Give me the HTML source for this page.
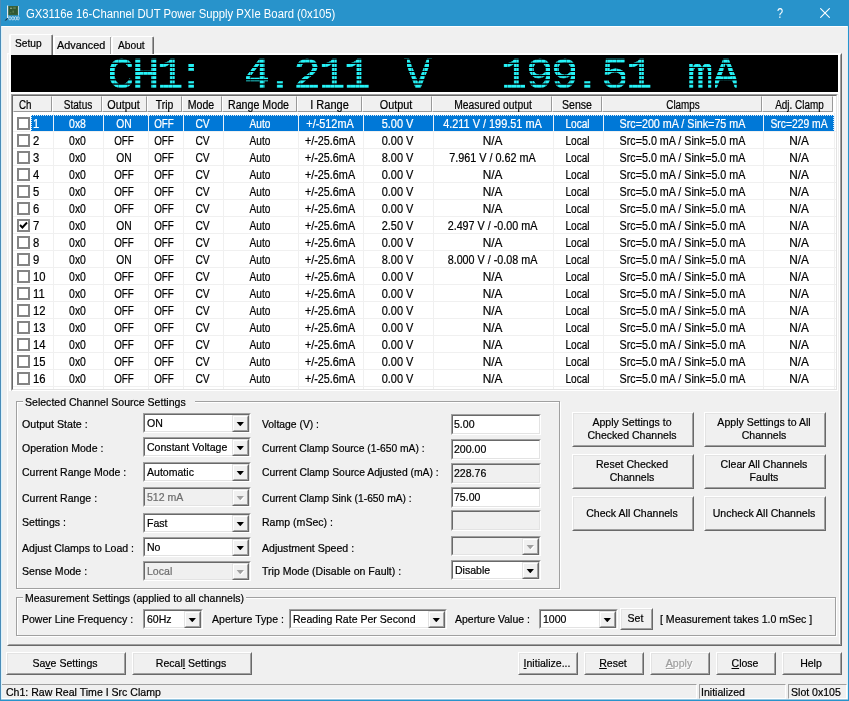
<!DOCTYPE html><html><head><meta charset="utf-8"><title>GX3116e</title><style>
*{box-sizing:border-box;margin:0;padding:0}
html,body{width:849px;height:701px;overflow:hidden}
body{position:relative;background:#f0f0f0;font-family:"Liberation Sans",sans-serif;font-size:11.6px;color:#000;line-height:13px;-webkit-text-stroke:0.22px}
.a{position:absolute;white-space:nowrap}
.t{transform:scaleX(0.91);transform-origin:0 50%}
.tc{transform:scaleX(0.91);transform-origin:50% 50%;text-align:center}
#title{left:0;top:0;width:849px;height:26px;background:#2893cb}
#frame{left:0;top:0;width:849px;height:701px;border:1px solid #2893cb;border-top:0;border-left-color:#4a8cb8}
#frame2{left:1px;top:26px;width:847px;height:673px;border:1px solid #dcf2fb;border-top:0;border-bottom:0}
#ttext{left:26px;top:6.5px;font-size:12px;color:#fff;line-height:15px;-webkit-text-stroke:0;transform:scaleX(.94);transform-origin:0 50%}
.sunk{border:1px solid;border-color:#a0a0a0 #fff #fff #a0a0a0}
.sunk>i{position:absolute;left:0;top:0;right:0;bottom:0;border:1px solid;border-color:#696969 #e3e3e3 #e3e3e3 #696969;display:block}
.btn{border:1px solid;border-color:#fff #696969 #696969 #fff;background:#f0f0f0;text-align:center}
.btn>i{position:absolute;left:0;top:0;right:0;bottom:0;border:1px solid;border-color:#e3e3e3 #a0a0a0 #a0a0a0 #e3e3e3;display:block}
.btn>span{position:relative;display:block;left:-0.7px}
.combo{background:#fff}
.combo.dis{background:#f0f0f0;color:#6d6d6d}
.combo>span{position:absolute;left:2.5px;top:1.5px}
.dd{position:absolute;right:1px;top:1px;bottom:0;width:17px;background:#f0f0f0;border:1px solid;border-color:#e3e3e3 #696969 #696969 #e3e3e3}
.dd>b{position:absolute;left:0;top:0;right:0;bottom:0;border:1px solid;border-color:#fff #a0a0a0 #a0a0a0 #fff}
.dd>s{position:absolute;left:3.2px;top:5.6px;width:8.2px;height:4.6px;background:#000;clip-path:polygon(0 0,100% 0,50% 100%)}
.dis .dd>s{background:#a0a0a0}
.dis .dd>u{position:absolute;left:4.2px;top:6.6px;width:8.2px;height:4.6px;background:#fff;clip-path:polygon(0 0,100% 0,50% 100%)}
.edit{background:#fff}
.edit.ro{background:#f0f0f0}
.edit>span{position:absolute;left:2px;top:1.5px}
.grp{border:1px solid #a0a0a0;box-shadow:1px 1px 0 #fff,inset 1px 1px 0 #fff}
.glab{background:#f0f0f0}
.hd{top:0;height:16px;background:#f0f0f0;border:1px solid;border-color:#f6f6f6 #999 #999 #fff}
.hd>span{position:absolute;left:0;right:0;top:2px}
.row{left:0;width:822px;height:16px}
.cell{top:0;height:16px;line-height:13px;padding-top:3px;font-size:12.5px}
.cb{left:4px;top:2px;width:13px;height:13px;background:#fff;border:2px solid #848484}
.u{text-decoration:underline}
</style></head><body>
<div class="a" id="title"></div>
<svg class="a" style="left:0;top:0" width="24" height="24" viewBox="0 0 24 24"><rect x="7" y="5.5" width="1.3" height="12.5" fill="#e4eaee"/><rect x="8.3" y="6" width="9.7" height="9.2" fill="#3a6238"/><rect x="9.3" y="7" width="7.7" height="7.2" fill="#2f5631"/><rect x="10" y="7.6" width="2.2" height="1.4" fill="#7f9c78"/><rect x="13.2" y="7.4" width="2.6" height="1.2" fill="#6e8f6a"/><rect x="12.4" y="10.6" width="1.6" height="2.2" fill="#54784f"/><rect x="10" y="12" width="1.4" height="1.4" fill="#486e45"/><rect x="18" y="6" width="0.8" height="9.5" fill="#cfe0ea"/><g fill="none" stroke="#e8f2f8" stroke-width="0.8" opacity=".85"><ellipse cx="10" cy="18.3" rx="1.2" ry="1.7"/><ellipse cx="12.9" cy="18.3" rx="1.2" ry="1.7"/><ellipse cx="15.6" cy="18.3" rx="1.2" ry="1.7"/><ellipse cx="18.1" cy="18.3" rx="1.1" ry="1.7"/></g><path d="M4.6 20.6L7.2 17.9L8 18.6L6.2 20.6Z" fill="#1d3342"/></svg>
<div class="a" id="ttext">GX3116e 16-Channel DUT Power Supply PXIe Board (0x105)</div>
<div class="a" style="left:777px;top:5.5px;color:#fff;font-size:14px;line-height:15px;-webkit-text-stroke:0;transform:scaleX(.78);transform-origin:0 50%">?</div>
<svg class="a" style="left:820px;top:8px" width="10" height="10" viewBox="0 0 10 10"><path d="M0.3 0.3L9.7 9.7M9.7 0.3L0.3 9.7" stroke="#fff" stroke-width="1.1" fill="none"/></svg>
<div class="a" style="left:1px;top:26px;width:847px;height:1px;background:#fff"></div>
<div class="a" style="left:7px;top:53px;width:835px;height:593px;border:1px solid;border-color:#fff #696969 #696969 #fff"><i style="position:absolute;left:0;top:0;right:0;bottom:0;border:1px solid;border-color:#fff #a0a0a0 #a0a0a0 #f0f0f0"></i></div>
<div class="a" style="left:839px;top:55px;width:1px;height:589px;background:#fff"></div>
<div class="a" style="left:9px;top:55px;width:2px;height:336px;background:#fff"></div>
<div class="a" style="left:53px;top:36px;width:59px;height:18px;background:#f0f0f0;border:1px solid;border-color:#fff #696969 #f0f0f0 #fff;border-bottom:0;border-radius:2px 2px 0 0"><i style="position:absolute;left:0;top:0;right:0;bottom:0;border-right:1px solid #a0a0a0;border-left:1px solid #fff"></i><span class="a" style="left:3.1000000000000014px;top:1px;transform:scaleX(0.9345);transform-origin:0 50%">Advanced</span></div>
<div class="a" style="left:111px;top:36px;width:43px;height:18px;background:#f0f0f0;border:1px solid;border-color:#fff #696969 #f0f0f0 #fff;border-bottom:0;border-radius:2px 2px 0 0"><i style="position:absolute;left:0;top:0;right:0;bottom:0;border-right:1px solid #a0a0a0;border-left:1px solid #fff"></i><span class="a" style="left:6.200000000000003px;top:1px;transform:scaleX(0.8808);transform-origin:0 50%">About</span></div>
<div class="a" style="left:9px;top:34px;width:44px;height:21px;background:#f0f0f0;border:1px solid;border-color:#fff #696969 #f0f0f0 #fff;border-bottom:0;border-radius:2px 2px 0 0"><i style="position:absolute;left:0;top:0;right:0;bottom:0;border-right:1px solid #a0a0a0;border-left:1px solid #fff"></i><span class="a" style="left:5.4px;top:1px;transform:scaleX(0.8808);transform-origin:0 50%">Setup</span></div>
<div class="a" style="left:11px;top:55px;width:829px;height:39px;background:#fff"></div>
<div class="a" id="lcd" style="left:11px;top:55px;width:827px;height:37px;background:#000;overflow:hidden">
<svg class="a" style="left:0;top:0" width="827" height="37" viewBox="11 55 827 37"><g font-family="Liberation Mono, DejaVu Sans Mono, monospace" font-size="43.6" fill="#26f4f8" stroke="#26f4f8" stroke-width="0.5" transform="scale(1.06,1)">
<text x="101.07 124.47 147.86 167.11" y="88">CH1:</text>
<text x="229.37 250.88 276.54 300.69 324.09" y="88">4.211</text>
<text x="381.26" y="88">V</text>
<text x="472.3 496.26 519.84 540.98 567.2 590.5" y="88">199.51</text>
<text x="647.77 671.64" y="88">mA</text>
</g></svg>
<div class="a" style="left:74.20px;top:3.8px;width:148.80px;height:33.2px;background:repeating-linear-gradient(180deg,#000 0,#000 0.35px,transparent 0.9px,transparent 3.3px,#000 3.85px,#000 4.17px),repeating-linear-gradient(90deg,rgba(0,0,0,.35) 0.00px,transparent 0.50px 3.90px,rgba(0,0,0,.35) 4.40px,rgba(0,0,0,.35) 4.40px,transparent 4.90px 8.30px,rgba(0,0,0,.35) 8.80px,rgba(0,0,0,.35) 8.80px,transparent 9.30px 12.70px,rgba(0,0,0,.35) 13.20px,rgba(0,0,0,.35) 13.20px,transparent 13.70px 17.10px,rgba(0,0,0,.35) 17.60px,rgba(0,0,0,.35) 17.60px,transparent 18.10px 21.50px,rgba(0,0,0,.35) 22.00px,#000 22.30px 24.80px)"></div>
<div class="a" style="left:209.90px;top:3.8px;width:175.70px;height:33.2px;background:repeating-linear-gradient(180deg,#000 0,#000 0.35px,transparent 0.9px,transparent 3.3px,#000 3.85px,#000 4.17px),repeating-linear-gradient(90deg,rgba(0,0,0,.35) 0.00px,transparent 0.50px 3.90px,rgba(0,0,0,.35) 4.40px,rgba(0,0,0,.35) 4.40px,transparent 4.90px 8.30px,rgba(0,0,0,.35) 8.80px,rgba(0,0,0,.35) 8.80px,transparent 9.30px 12.70px,rgba(0,0,0,.35) 13.20px,rgba(0,0,0,.35) 13.20px,transparent 13.70px 17.10px,rgba(0,0,0,.35) 17.60px,rgba(0,0,0,.35) 17.60px,transparent 18.10px 21.50px,rgba(0,0,0,.35) 22.00px,#000 22.30px 25.10px)"></div>
<div class="a" style="left:371.00px;top:3.8px;width:75.00px;height:33.2px;background:repeating-linear-gradient(180deg,#000 0,#000 0.35px,transparent 0.9px,transparent 3.3px,#000 3.85px,#000 4.17px),repeating-linear-gradient(90deg,rgba(0,0,0,.35) 0.00px,transparent 0.50px 3.90px,rgba(0,0,0,.35) 4.40px,rgba(0,0,0,.35) 4.40px,transparent 4.90px 8.30px,rgba(0,0,0,.35) 8.80px,rgba(0,0,0,.35) 8.80px,transparent 9.30px 12.70px,rgba(0,0,0,.35) 13.20px,rgba(0,0,0,.35) 13.20px,transparent 13.70px 17.10px,rgba(0,0,0,.35) 17.60px,rgba(0,0,0,.35) 17.60px,transparent 18.10px 21.50px,rgba(0,0,0,.35) 22.00px,#000 22.30px 25.00px)"></div>
<div class="a" style="left:467.44px;top:3.8px;width:200.48px;height:33.2px;background:repeating-linear-gradient(180deg,#000 0,#000 0.35px,transparent 0.9px,transparent 3.3px,#000 3.85px,#000 4.17px),repeating-linear-gradient(90deg,rgba(0,0,0,.35) 0.00px,transparent 0.50px 3.90px,rgba(0,0,0,.35) 4.40px,rgba(0,0,0,.35) 4.40px,transparent 4.90px 8.30px,rgba(0,0,0,.35) 8.80px,rgba(0,0,0,.35) 8.80px,transparent 9.30px 12.70px,rgba(0,0,0,.35) 13.20px,rgba(0,0,0,.35) 13.20px,transparent 13.70px 17.10px,rgba(0,0,0,.35) 17.60px,rgba(0,0,0,.35) 17.60px,transparent 18.10px 21.50px,rgba(0,0,0,.35) 22.00px,#000 22.30px 25.06px)"></div>
<div class="a" style="left:653.20px;top:3.8px;width:101.20px;height:33.2px;background:repeating-linear-gradient(180deg,#000 0,#000 0.35px,transparent 0.9px,transparent 3.3px,#000 3.85px,#000 4.17px),repeating-linear-gradient(90deg,rgba(0,0,0,.35) 0.00px,transparent 0.50px 3.90px,rgba(0,0,0,.35) 4.40px,rgba(0,0,0,.35) 4.40px,transparent 4.90px 8.30px,rgba(0,0,0,.35) 8.80px,rgba(0,0,0,.35) 8.80px,transparent 9.30px 12.70px,rgba(0,0,0,.35) 13.20px,rgba(0,0,0,.35) 13.20px,transparent 13.70px 17.10px,rgba(0,0,0,.35) 17.60px,rgba(0,0,0,.35) 17.60px,transparent 18.10px 21.50px,rgba(0,0,0,.35) 22.00px,#000 22.30px 25.30px)"></div>
</div>
<div class="a" style="left:11px;top:94px;width:827px;height:297px;background:#fff;border:1px solid;border-color:#a0a0a0 #fff #fff #a0a0a0"><i style="position:absolute;left:0;top:0;right:0;bottom:0;border:1px solid;border-color:#696969 #e3e3e3 #e3e3e3 #696969;display:block"></i>
<div class="a" style="left:1px;top:1px;width:823px;height:293px;overflow:hidden">
<div class="a hd" style="left:0px;width:39px;border-left-color:#f0f0f0"><span style="left:5px;font-size:12.5px;transform:scaleX(0.782);transform-origin:0 50%">Ch</span></div>
<div class="a hd" style="left:39px;width:50px"><span style="text-align:center;font-size:12.5px;left:0.5px;right:-0.5px;transform:scaleX(0.8042)">Status</span></div>
<div class="a hd" style="left:89px;width:45px"><span style="text-align:center;font-size:12.5px;left:-1.1px;right:1.1px;transform:scaleX(0.8659)">Output</span></div>
<div class="a hd" style="left:134px;width:35px"><span style="text-align:center;font-size:12.5px;left:0.4px;right:-0.4px;transform:scaleX(0.8302)">Trip</span></div>
<div class="a hd" style="left:169px;width:40px"><span style="text-align:center;font-size:12.5px;left:-0.7px;right:0.7px;transform:scaleX(0.8472)">Mode</span></div>
<div class="a hd" style="left:209px;width:75px"><span style="text-align:center;font-size:12.5px;left:-1px;right:1px;transform:scaleX(0.8522)">Range Mode</span></div>
<div class="a hd" style="left:284px;width:65px"><span style="text-align:center;font-size:12.5px;left:-0.35px;right:0.35px;transform:scaleX(0.8794)">I Range</span></div>
<div class="a hd" style="left:349px;width:70px"><span style="text-align:center;font-size:12.5px;left:-1.4px;right:1.4px;transform:scaleX(0.8659)">Output</span></div>
<div class="a hd" style="left:419px;width:120px"><span style="text-align:center;font-size:12.5px;left:0.6px;right:-0.6px;transform:scaleX(0.8261)">Measured output</span></div>
<div class="a hd" style="left:539px;width:50px"><span style="text-align:center;font-size:12.5px;left:0.1px;right:-0.1px;transform:scaleX(0.8462)">Sense</span></div>
<div class="a hd" style="left:589px;width:160px"><span style="text-align:center;font-size:12.5px;left:0.6px;right:-0.6px;transform:scaleX(0.7906)">Clamps</span></div>
<div class="a hd" style="left:749px;width:71px"><span style="text-align:center;font-size:12.5px;left:1.6px;right:-1.6px;transform:scaleX(0.7933)">Adj. Clamp</span></div>
<div class="a row" style="top:19px">
<div class="a" style="left:18px;top:0;width:803px;height:16px;background:#0078d7"><div class="a" style="left:0;top:0;width:803px;height:1px;background:repeating-linear-gradient(90deg,rgba(255,255,255,.85) 0 1px,transparent 1px 2px)"></div><div class="a" style="left:0;top:0;width:1px;height:16px;background:repeating-linear-gradient(180deg,rgba(255,255,255,.85) 0 1px,transparent 1px 2px)"></div><div class="a" style="left:802px;top:0;width:1px;height:16px;background:repeating-linear-gradient(180deg,rgba(255,255,255,.85) 0 1px,transparent 1px 2px)"></div></div>
<div class="a cb"></div>
<div class="a cell" style="left:20px;color:#fff;transform:scaleX(.9);transform-origin:0 50%">1</div>
<div class="a cell" style="left:40.3px;width:49px;text-align:center;color:#fff;transform:scaleX(0.8335)">0x8</div>
<div class="a cell" style="left:89px;width:44px;text-align:center;color:#fff;transform:scaleX(0.8213)">ON</div>
<div class="a cell" style="left:134px;width:34px;text-align:center;color:#fff;transform:scaleX(0.784)">OFF</div>
<div class="a cell" style="left:170px;width:39px;text-align:center;color:#fff;transform:scaleX(0.8173)">CV</div>
<div class="a cell" style="left:210px;width:74px;text-align:center;color:#fff;transform:scaleX(0.8126)">Auto</div>
<div class="a cell" style="left:285px;width:64px;text-align:center;color:#fff;transform:scaleX(0.869)">+/-512mA</div>
<div class="a cell" style="left:350px;width:69px;text-align:center;color:#fff;transform:scaleX(0.8771)">5.00 V</div>
<div class="a cell" style="left:420px;width:119px;text-align:center;color:#fff;transform:scaleX(0.8722)">4.211 V / 199.51 mA</div>
<div class="a cell" style="left:540.2px;width:49px;text-align:center;color:#fff;transform:scaleX(0.8096)">Local</div>
<div class="a cell" style="left:590.3px;width:159px;text-align:center;color:#fff;transform:scaleX(0.8581)">Src=200 mA / Sink=75 mA</div>
<div class="a cell" style="left:750.5px;width:70px;text-align:center;color:#fff;transform:scaleX(0.8273)">Src=229 mA</div>
</div>
<div class="a row" style="top:36px">
<div class="a cb"></div>
<div class="a cell" style="left:20px;transform:scaleX(.9);transform-origin:0 50%">2</div>
<div class="a cell" style="left:40.3px;width:49px;text-align:center;transform:scaleX(0.8335)">0x0</div>
<div class="a cell" style="left:89px;width:44px;text-align:center;transform:scaleX(0.784)">OFF</div>
<div class="a cell" style="left:134px;width:34px;text-align:center;transform:scaleX(0.784)">OFF</div>
<div class="a cell" style="left:170px;width:39px;text-align:center;transform:scaleX(0.8173)">CV</div>
<div class="a cell" style="left:210px;width:74px;text-align:center;transform:scaleX(0.8126)">Auto</div>
<div class="a cell" style="left:285px;width:64px;text-align:center;transform:scaleX(0.8653)">+/-25.6mA</div>
<div class="a cell" style="left:350px;width:69px;text-align:center;transform:scaleX(0.8771)">0.00 V</div>
<div class="a cell" style="left:420px;width:119px;text-align:center;transform:scaleX(0.9451)">N/A</div>
<div class="a cell" style="left:540.2px;width:49px;text-align:center;transform:scaleX(0.8096)">Local</div>
<div class="a cell" style="left:590.3px;width:159px;text-align:center;transform:scaleX(0.8581)">Src=5.0 mA / Sink=5.0 mA</div>
<div class="a cell" style="left:750.5px;width:70px;text-align:center;transform:scaleX(0.9451)">N/A</div>
</div>
<div class="a row" style="top:53px">
<div class="a cb"></div>
<div class="a cell" style="left:20px;transform:scaleX(.9);transform-origin:0 50%">3</div>
<div class="a cell" style="left:40.3px;width:49px;text-align:center;transform:scaleX(0.8335)">0x0</div>
<div class="a cell" style="left:89px;width:44px;text-align:center;transform:scaleX(0.8213)">ON</div>
<div class="a cell" style="left:134px;width:34px;text-align:center;transform:scaleX(0.784)">OFF</div>
<div class="a cell" style="left:170px;width:39px;text-align:center;transform:scaleX(0.8173)">CV</div>
<div class="a cell" style="left:210px;width:74px;text-align:center;transform:scaleX(0.8126)">Auto</div>
<div class="a cell" style="left:285px;width:64px;text-align:center;transform:scaleX(0.8653)">+/-25.6mA</div>
<div class="a cell" style="left:350px;width:69px;text-align:center;transform:scaleX(0.8771)">8.00 V</div>
<div class="a cell" style="left:420px;width:119px;text-align:center;transform:scaleX(0.8655)">7.961 V / 0.62 mA</div>
<div class="a cell" style="left:540.2px;width:49px;text-align:center;transform:scaleX(0.8096)">Local</div>
<div class="a cell" style="left:590.3px;width:159px;text-align:center;transform:scaleX(0.8581)">Src=5.0 mA / Sink=5.0 mA</div>
<div class="a cell" style="left:750.5px;width:70px;text-align:center;transform:scaleX(0.9451)">N/A</div>
</div>
<div class="a row" style="top:70px">
<div class="a cb"></div>
<div class="a cell" style="left:20px;transform:scaleX(.9);transform-origin:0 50%">4</div>
<div class="a cell" style="left:40.3px;width:49px;text-align:center;transform:scaleX(0.8335)">0x0</div>
<div class="a cell" style="left:89px;width:44px;text-align:center;transform:scaleX(0.784)">OFF</div>
<div class="a cell" style="left:134px;width:34px;text-align:center;transform:scaleX(0.784)">OFF</div>
<div class="a cell" style="left:170px;width:39px;text-align:center;transform:scaleX(0.8173)">CV</div>
<div class="a cell" style="left:210px;width:74px;text-align:center;transform:scaleX(0.8126)">Auto</div>
<div class="a cell" style="left:285px;width:64px;text-align:center;transform:scaleX(0.8653)">+/-25.6mA</div>
<div class="a cell" style="left:350px;width:69px;text-align:center;transform:scaleX(0.8771)">0.00 V</div>
<div class="a cell" style="left:420px;width:119px;text-align:center;transform:scaleX(0.9451)">N/A</div>
<div class="a cell" style="left:540.2px;width:49px;text-align:center;transform:scaleX(0.8096)">Local</div>
<div class="a cell" style="left:590.3px;width:159px;text-align:center;transform:scaleX(0.8581)">Src=5.0 mA / Sink=5.0 mA</div>
<div class="a cell" style="left:750.5px;width:70px;text-align:center;transform:scaleX(0.9451)">N/A</div>
</div>
<div class="a row" style="top:87px">
<div class="a cb"></div>
<div class="a cell" style="left:20px;transform:scaleX(.9);transform-origin:0 50%">5</div>
<div class="a cell" style="left:40.3px;width:49px;text-align:center;transform:scaleX(0.8335)">0x0</div>
<div class="a cell" style="left:89px;width:44px;text-align:center;transform:scaleX(0.784)">OFF</div>
<div class="a cell" style="left:134px;width:34px;text-align:center;transform:scaleX(0.784)">OFF</div>
<div class="a cell" style="left:170px;width:39px;text-align:center;transform:scaleX(0.8173)">CV</div>
<div class="a cell" style="left:210px;width:74px;text-align:center;transform:scaleX(0.8126)">Auto</div>
<div class="a cell" style="left:285px;width:64px;text-align:center;transform:scaleX(0.8653)">+/-25.6mA</div>
<div class="a cell" style="left:350px;width:69px;text-align:center;transform:scaleX(0.8771)">0.00 V</div>
<div class="a cell" style="left:420px;width:119px;text-align:center;transform:scaleX(0.9451)">N/A</div>
<div class="a cell" style="left:540.2px;width:49px;text-align:center;transform:scaleX(0.8096)">Local</div>
<div class="a cell" style="left:590.3px;width:159px;text-align:center;transform:scaleX(0.8581)">Src=5.0 mA / Sink=5.0 mA</div>
<div class="a cell" style="left:750.5px;width:70px;text-align:center;transform:scaleX(0.9451)">N/A</div>
</div>
<div class="a row" style="top:104px">
<div class="a cb"></div>
<div class="a cell" style="left:20px;transform:scaleX(.9);transform-origin:0 50%">6</div>
<div class="a cell" style="left:40.3px;width:49px;text-align:center;transform:scaleX(0.8335)">0x0</div>
<div class="a cell" style="left:89px;width:44px;text-align:center;transform:scaleX(0.784)">OFF</div>
<div class="a cell" style="left:134px;width:34px;text-align:center;transform:scaleX(0.784)">OFF</div>
<div class="a cell" style="left:170px;width:39px;text-align:center;transform:scaleX(0.8173)">CV</div>
<div class="a cell" style="left:210px;width:74px;text-align:center;transform:scaleX(0.8126)">Auto</div>
<div class="a cell" style="left:285px;width:64px;text-align:center;transform:scaleX(0.8653)">+/-25.6mA</div>
<div class="a cell" style="left:350px;width:69px;text-align:center;transform:scaleX(0.8771)">0.00 V</div>
<div class="a cell" style="left:420px;width:119px;text-align:center;transform:scaleX(0.9451)">N/A</div>
<div class="a cell" style="left:540.2px;width:49px;text-align:center;transform:scaleX(0.8096)">Local</div>
<div class="a cell" style="left:590.3px;width:159px;text-align:center;transform:scaleX(0.8581)">Src=5.0 mA / Sink=5.0 mA</div>
<div class="a cell" style="left:750.5px;width:70px;text-align:center;transform:scaleX(0.9451)">N/A</div>
</div>
<div class="a row" style="top:121px">
<div class="a cb"><svg width="9" height="9" viewBox="0 0 9 9" style="position:absolute;left:0;top:0"><path d="M1 4L3.4 6.5L8 1.5" stroke="#000" stroke-width="1.9" fill="none"/></svg></div>
<div class="a cell" style="left:20px;transform:scaleX(.9);transform-origin:0 50%">7</div>
<div class="a cell" style="left:40.3px;width:49px;text-align:center;transform:scaleX(0.8335)">0x0</div>
<div class="a cell" style="left:89px;width:44px;text-align:center;transform:scaleX(0.8213)">ON</div>
<div class="a cell" style="left:134px;width:34px;text-align:center;transform:scaleX(0.784)">OFF</div>
<div class="a cell" style="left:170px;width:39px;text-align:center;transform:scaleX(0.8173)">CV</div>
<div class="a cell" style="left:210px;width:74px;text-align:center;transform:scaleX(0.8126)">Auto</div>
<div class="a cell" style="left:285px;width:64px;text-align:center;transform:scaleX(0.8653)">+/-25.6mA</div>
<div class="a cell" style="left:350px;width:69px;text-align:center;transform:scaleX(0.8771)">2.50 V</div>
<div class="a cell" style="left:420px;width:119px;text-align:center;transform:scaleX(0.86)">2.497 V / -0.00 mA</div>
<div class="a cell" style="left:540.2px;width:49px;text-align:center;transform:scaleX(0.8096)">Local</div>
<div class="a cell" style="left:590.3px;width:159px;text-align:center;transform:scaleX(0.8581)">Src=5.0 mA / Sink=5.0 mA</div>
<div class="a cell" style="left:750.5px;width:70px;text-align:center;transform:scaleX(0.9451)">N/A</div>
</div>
<div class="a row" style="top:138px">
<div class="a cb"></div>
<div class="a cell" style="left:20px;transform:scaleX(.9);transform-origin:0 50%">8</div>
<div class="a cell" style="left:40.3px;width:49px;text-align:center;transform:scaleX(0.8335)">0x0</div>
<div class="a cell" style="left:89px;width:44px;text-align:center;transform:scaleX(0.784)">OFF</div>
<div class="a cell" style="left:134px;width:34px;text-align:center;transform:scaleX(0.784)">OFF</div>
<div class="a cell" style="left:170px;width:39px;text-align:center;transform:scaleX(0.8173)">CV</div>
<div class="a cell" style="left:210px;width:74px;text-align:center;transform:scaleX(0.8126)">Auto</div>
<div class="a cell" style="left:285px;width:64px;text-align:center;transform:scaleX(0.8653)">+/-25.6mA</div>
<div class="a cell" style="left:350px;width:69px;text-align:center;transform:scaleX(0.8771)">0.00 V</div>
<div class="a cell" style="left:420px;width:119px;text-align:center;transform:scaleX(0.9451)">N/A</div>
<div class="a cell" style="left:540.2px;width:49px;text-align:center;transform:scaleX(0.8096)">Local</div>
<div class="a cell" style="left:590.3px;width:159px;text-align:center;transform:scaleX(0.8581)">Src=5.0 mA / Sink=5.0 mA</div>
<div class="a cell" style="left:750.5px;width:70px;text-align:center;transform:scaleX(0.9451)">N/A</div>
</div>
<div class="a row" style="top:155px">
<div class="a cb"></div>
<div class="a cell" style="left:20px;transform:scaleX(.9);transform-origin:0 50%">9</div>
<div class="a cell" style="left:40.3px;width:49px;text-align:center;transform:scaleX(0.8335)">0x0</div>
<div class="a cell" style="left:89px;width:44px;text-align:center;transform:scaleX(0.8213)">ON</div>
<div class="a cell" style="left:134px;width:34px;text-align:center;transform:scaleX(0.784)">OFF</div>
<div class="a cell" style="left:170px;width:39px;text-align:center;transform:scaleX(0.8173)">CV</div>
<div class="a cell" style="left:210px;width:74px;text-align:center;transform:scaleX(0.8126)">Auto</div>
<div class="a cell" style="left:285px;width:64px;text-align:center;transform:scaleX(0.8653)">+/-25.6mA</div>
<div class="a cell" style="left:350px;width:69px;text-align:center;transform:scaleX(0.8771)">8.00 V</div>
<div class="a cell" style="left:420px;width:119px;text-align:center;transform:scaleX(0.86)">8.000 V / -0.08 mA</div>
<div class="a cell" style="left:540.2px;width:49px;text-align:center;transform:scaleX(0.8096)">Local</div>
<div class="a cell" style="left:590.3px;width:159px;text-align:center;transform:scaleX(0.8581)">Src=5.0 mA / Sink=5.0 mA</div>
<div class="a cell" style="left:750.5px;width:70px;text-align:center;transform:scaleX(0.9451)">N/A</div>
</div>
<div class="a row" style="top:172px">
<div class="a cb"></div>
<div class="a cell" style="left:20px;transform:scaleX(.9);transform-origin:0 50%">10</div>
<div class="a cell" style="left:40.3px;width:49px;text-align:center;transform:scaleX(0.8335)">0x0</div>
<div class="a cell" style="left:89px;width:44px;text-align:center;transform:scaleX(0.784)">OFF</div>
<div class="a cell" style="left:134px;width:34px;text-align:center;transform:scaleX(0.784)">OFF</div>
<div class="a cell" style="left:170px;width:39px;text-align:center;transform:scaleX(0.8173)">CV</div>
<div class="a cell" style="left:210px;width:74px;text-align:center;transform:scaleX(0.8126)">Auto</div>
<div class="a cell" style="left:285px;width:64px;text-align:center;transform:scaleX(0.8653)">+/-25.6mA</div>
<div class="a cell" style="left:350px;width:69px;text-align:center;transform:scaleX(0.8771)">0.00 V</div>
<div class="a cell" style="left:420px;width:119px;text-align:center;transform:scaleX(0.9451)">N/A</div>
<div class="a cell" style="left:540.2px;width:49px;text-align:center;transform:scaleX(0.8096)">Local</div>
<div class="a cell" style="left:590.3px;width:159px;text-align:center;transform:scaleX(0.8581)">Src=5.0 mA / Sink=5.0 mA</div>
<div class="a cell" style="left:750.5px;width:70px;text-align:center;transform:scaleX(0.9451)">N/A</div>
</div>
<div class="a row" style="top:189px">
<div class="a cb"></div>
<div class="a cell" style="left:20px;transform:scaleX(.9);transform-origin:0 50%">11</div>
<div class="a cell" style="left:40.3px;width:49px;text-align:center;transform:scaleX(0.8335)">0x0</div>
<div class="a cell" style="left:89px;width:44px;text-align:center;transform:scaleX(0.784)">OFF</div>
<div class="a cell" style="left:134px;width:34px;text-align:center;transform:scaleX(0.784)">OFF</div>
<div class="a cell" style="left:170px;width:39px;text-align:center;transform:scaleX(0.8173)">CV</div>
<div class="a cell" style="left:210px;width:74px;text-align:center;transform:scaleX(0.8126)">Auto</div>
<div class="a cell" style="left:285px;width:64px;text-align:center;transform:scaleX(0.8653)">+/-25.6mA</div>
<div class="a cell" style="left:350px;width:69px;text-align:center;transform:scaleX(0.8771)">0.00 V</div>
<div class="a cell" style="left:420px;width:119px;text-align:center;transform:scaleX(0.9451)">N/A</div>
<div class="a cell" style="left:540.2px;width:49px;text-align:center;transform:scaleX(0.8096)">Local</div>
<div class="a cell" style="left:590.3px;width:159px;text-align:center;transform:scaleX(0.8581)">Src=5.0 mA / Sink=5.0 mA</div>
<div class="a cell" style="left:750.5px;width:70px;text-align:center;transform:scaleX(0.9451)">N/A</div>
</div>
<div class="a row" style="top:206px">
<div class="a cb"></div>
<div class="a cell" style="left:20px;transform:scaleX(.9);transform-origin:0 50%">12</div>
<div class="a cell" style="left:40.3px;width:49px;text-align:center;transform:scaleX(0.8335)">0x0</div>
<div class="a cell" style="left:89px;width:44px;text-align:center;transform:scaleX(0.784)">OFF</div>
<div class="a cell" style="left:134px;width:34px;text-align:center;transform:scaleX(0.784)">OFF</div>
<div class="a cell" style="left:170px;width:39px;text-align:center;transform:scaleX(0.8173)">CV</div>
<div class="a cell" style="left:210px;width:74px;text-align:center;transform:scaleX(0.8126)">Auto</div>
<div class="a cell" style="left:285px;width:64px;text-align:center;transform:scaleX(0.8653)">+/-25.6mA</div>
<div class="a cell" style="left:350px;width:69px;text-align:center;transform:scaleX(0.8771)">0.00 V</div>
<div class="a cell" style="left:420px;width:119px;text-align:center;transform:scaleX(0.9451)">N/A</div>
<div class="a cell" style="left:540.2px;width:49px;text-align:center;transform:scaleX(0.8096)">Local</div>
<div class="a cell" style="left:590.3px;width:159px;text-align:center;transform:scaleX(0.8581)">Src=5.0 mA / Sink=5.0 mA</div>
<div class="a cell" style="left:750.5px;width:70px;text-align:center;transform:scaleX(0.9451)">N/A</div>
</div>
<div class="a row" style="top:223px">
<div class="a cb"></div>
<div class="a cell" style="left:20px;transform:scaleX(.9);transform-origin:0 50%">13</div>
<div class="a cell" style="left:40.3px;width:49px;text-align:center;transform:scaleX(0.8335)">0x0</div>
<div class="a cell" style="left:89px;width:44px;text-align:center;transform:scaleX(0.784)">OFF</div>
<div class="a cell" style="left:134px;width:34px;text-align:center;transform:scaleX(0.784)">OFF</div>
<div class="a cell" style="left:170px;width:39px;text-align:center;transform:scaleX(0.8173)">CV</div>
<div class="a cell" style="left:210px;width:74px;text-align:center;transform:scaleX(0.8126)">Auto</div>
<div class="a cell" style="left:285px;width:64px;text-align:center;transform:scaleX(0.8653)">+/-25.6mA</div>
<div class="a cell" style="left:350px;width:69px;text-align:center;transform:scaleX(0.8771)">0.00 V</div>
<div class="a cell" style="left:420px;width:119px;text-align:center;transform:scaleX(0.9451)">N/A</div>
<div class="a cell" style="left:540.2px;width:49px;text-align:center;transform:scaleX(0.8096)">Local</div>
<div class="a cell" style="left:590.3px;width:159px;text-align:center;transform:scaleX(0.8581)">Src=5.0 mA / Sink=5.0 mA</div>
<div class="a cell" style="left:750.5px;width:70px;text-align:center;transform:scaleX(0.9451)">N/A</div>
</div>
<div class="a row" style="top:240px">
<div class="a cb"></div>
<div class="a cell" style="left:20px;transform:scaleX(.9);transform-origin:0 50%">14</div>
<div class="a cell" style="left:40.3px;width:49px;text-align:center;transform:scaleX(0.8335)">0x0</div>
<div class="a cell" style="left:89px;width:44px;text-align:center;transform:scaleX(0.784)">OFF</div>
<div class="a cell" style="left:134px;width:34px;text-align:center;transform:scaleX(0.784)">OFF</div>
<div class="a cell" style="left:170px;width:39px;text-align:center;transform:scaleX(0.8173)">CV</div>
<div class="a cell" style="left:210px;width:74px;text-align:center;transform:scaleX(0.8126)">Auto</div>
<div class="a cell" style="left:285px;width:64px;text-align:center;transform:scaleX(0.8653)">+/-25.6mA</div>
<div class="a cell" style="left:350px;width:69px;text-align:center;transform:scaleX(0.8771)">0.00 V</div>
<div class="a cell" style="left:420px;width:119px;text-align:center;transform:scaleX(0.9451)">N/A</div>
<div class="a cell" style="left:540.2px;width:49px;text-align:center;transform:scaleX(0.8096)">Local</div>
<div class="a cell" style="left:590.3px;width:159px;text-align:center;transform:scaleX(0.8581)">Src=5.0 mA / Sink=5.0 mA</div>
<div class="a cell" style="left:750.5px;width:70px;text-align:center;transform:scaleX(0.9451)">N/A</div>
</div>
<div class="a row" style="top:257px">
<div class="a cb"></div>
<div class="a cell" style="left:20px;transform:scaleX(.9);transform-origin:0 50%">15</div>
<div class="a cell" style="left:40.3px;width:49px;text-align:center;transform:scaleX(0.8335)">0x0</div>
<div class="a cell" style="left:89px;width:44px;text-align:center;transform:scaleX(0.784)">OFF</div>
<div class="a cell" style="left:134px;width:34px;text-align:center;transform:scaleX(0.784)">OFF</div>
<div class="a cell" style="left:170px;width:39px;text-align:center;transform:scaleX(0.8173)">CV</div>
<div class="a cell" style="left:210px;width:74px;text-align:center;transform:scaleX(0.8126)">Auto</div>
<div class="a cell" style="left:285px;width:64px;text-align:center;transform:scaleX(0.8653)">+/-25.6mA</div>
<div class="a cell" style="left:350px;width:69px;text-align:center;transform:scaleX(0.8771)">0.00 V</div>
<div class="a cell" style="left:420px;width:119px;text-align:center;transform:scaleX(0.9451)">N/A</div>
<div class="a cell" style="left:540.2px;width:49px;text-align:center;transform:scaleX(0.8096)">Local</div>
<div class="a cell" style="left:590.3px;width:159px;text-align:center;transform:scaleX(0.8581)">Src=5.0 mA / Sink=5.0 mA</div>
<div class="a cell" style="left:750.5px;width:70px;text-align:center;transform:scaleX(0.9451)">N/A</div>
</div>
<div class="a row" style="top:274px">
<div class="a cb"></div>
<div class="a cell" style="left:20px;transform:scaleX(.9);transform-origin:0 50%">16</div>
<div class="a cell" style="left:40.3px;width:49px;text-align:center;transform:scaleX(0.8335)">0x0</div>
<div class="a cell" style="left:89px;width:44px;text-align:center;transform:scaleX(0.784)">OFF</div>
<div class="a cell" style="left:134px;width:34px;text-align:center;transform:scaleX(0.784)">OFF</div>
<div class="a cell" style="left:170px;width:39px;text-align:center;transform:scaleX(0.8173)">CV</div>
<div class="a cell" style="left:210px;width:74px;text-align:center;transform:scaleX(0.8126)">Auto</div>
<div class="a cell" style="left:285px;width:64px;text-align:center;transform:scaleX(0.8653)">+/-25.6mA</div>
<div class="a cell" style="left:350px;width:69px;text-align:center;transform:scaleX(0.8771)">0.00 V</div>
<div class="a cell" style="left:420px;width:119px;text-align:center;transform:scaleX(0.9451)">N/A</div>
<div class="a cell" style="left:540.2px;width:49px;text-align:center;transform:scaleX(0.8096)">Local</div>
<div class="a cell" style="left:590.3px;width:159px;text-align:center;transform:scaleX(0.8581)">Src=5.0 mA / Sink=5.0 mA</div>
<div class="a cell" style="left:750.5px;width:70px;text-align:center;transform:scaleX(0.9451)">N/A</div>
</div>
<div class="a" style="left:40px;top:17px;width:1px;height:276px;background:#f0f0f0;mix-blend-mode:multiply"></div>
<div class="a" style="left:40px;top:19px;width:1px;height:16px;background:#e8f2fb"></div>
<div class="a" style="left:90px;top:17px;width:1px;height:276px;background:#f0f0f0;mix-blend-mode:multiply"></div>
<div class="a" style="left:90px;top:19px;width:1px;height:16px;background:#e8f2fb"></div>
<div class="a" style="left:135px;top:17px;width:1px;height:276px;background:#f0f0f0;mix-blend-mode:multiply"></div>
<div class="a" style="left:135px;top:19px;width:1px;height:16px;background:#e8f2fb"></div>
<div class="a" style="left:170px;top:17px;width:1px;height:276px;background:#f0f0f0;mix-blend-mode:multiply"></div>
<div class="a" style="left:170px;top:19px;width:1px;height:16px;background:#e8f2fb"></div>
<div class="a" style="left:210px;top:17px;width:1px;height:276px;background:#f0f0f0;mix-blend-mode:multiply"></div>
<div class="a" style="left:210px;top:19px;width:1px;height:16px;background:#e8f2fb"></div>
<div class="a" style="left:285px;top:17px;width:1px;height:276px;background:#f0f0f0;mix-blend-mode:multiply"></div>
<div class="a" style="left:285px;top:19px;width:1px;height:16px;background:#e8f2fb"></div>
<div class="a" style="left:350px;top:17px;width:1px;height:276px;background:#f0f0f0;mix-blend-mode:multiply"></div>
<div class="a" style="left:350px;top:19px;width:1px;height:16px;background:#e8f2fb"></div>
<div class="a" style="left:420px;top:17px;width:1px;height:276px;background:#f0f0f0;mix-blend-mode:multiply"></div>
<div class="a" style="left:420px;top:19px;width:1px;height:16px;background:#e8f2fb"></div>
<div class="a" style="left:540px;top:17px;width:1px;height:276px;background:#f0f0f0;mix-blend-mode:multiply"></div>
<div class="a" style="left:540px;top:19px;width:1px;height:16px;background:#e8f2fb"></div>
<div class="a" style="left:590px;top:17px;width:1px;height:276px;background:#f0f0f0;mix-blend-mode:multiply"></div>
<div class="a" style="left:590px;top:19px;width:1px;height:16px;background:#e8f2fb"></div>
<div class="a" style="left:750px;top:17px;width:1px;height:276px;background:#f0f0f0;mix-blend-mode:multiply"></div>
<div class="a" style="left:750px;top:19px;width:1px;height:16px;background:#e8f2fb"></div>
<div class="a" style="left:821px;top:17px;width:1px;height:276px;background:#f0f0f0;mix-blend-mode:multiply"></div>
<div class="a" style="left:821px;top:19px;width:1px;height:16px;background:#e8f2fb"></div>
<div class="a" style="left:0;top:35px;width:825px;height:1px;background:#f0f0f0"></div>
<div class="a" style="left:0;top:52px;width:825px;height:1px;background:#f0f0f0"></div>
<div class="a" style="left:0;top:69px;width:825px;height:1px;background:#f0f0f0"></div>
<div class="a" style="left:0;top:86px;width:825px;height:1px;background:#f0f0f0"></div>
<div class="a" style="left:0;top:103px;width:825px;height:1px;background:#f0f0f0"></div>
<div class="a" style="left:0;top:120px;width:825px;height:1px;background:#f0f0f0"></div>
<div class="a" style="left:0;top:137px;width:825px;height:1px;background:#f0f0f0"></div>
<div class="a" style="left:0;top:154px;width:825px;height:1px;background:#f0f0f0"></div>
<div class="a" style="left:0;top:171px;width:825px;height:1px;background:#f0f0f0"></div>
<div class="a" style="left:0;top:188px;width:825px;height:1px;background:#f0f0f0"></div>
<div class="a" style="left:0;top:205px;width:825px;height:1px;background:#f0f0f0"></div>
<div class="a" style="left:0;top:222px;width:825px;height:1px;background:#f0f0f0"></div>
<div class="a" style="left:0;top:239px;width:825px;height:1px;background:#f0f0f0"></div>
<div class="a" style="left:0;top:256px;width:825px;height:1px;background:#f0f0f0"></div>
<div class="a" style="left:0;top:273px;width:825px;height:1px;background:#f0f0f0"></div>
<div class="a" style="left:0;top:290px;width:825px;height:1px;background:#f0f0f0"></div>
</div></div>
<div class="a grp" style="left:16px;top:401px;width:544px;height:188px"></div>
<div class="a glab" style="left:23px;top:395px;width:172px;height:13px"></div>
<div class="a t" style="left:25px;top:395px">Selected Channel Source Settings</div>
<div class="a t" style="left:22px;top:417px;transform:scaleX(0.9183)">Output State :</div>
<div class="a t" style="left:22px;top:441px;transform:scaleX(0.9085)">Operation Mode :</div>
<div class="a t" style="left:22px;top:465px;transform:scaleX(0.9083)">Current Range Mode :</div>
<div class="a t" style="left:22px;top:491px">Current Range :</div>
<div class="a t" style="left:22px;top:515px">Settings :</div>
<div class="a t" style="left:22px;top:541px">Adjust Clamps to Load :</div>
<div class="a t" style="left:22px;top:564px">Sense Mode :</div>
<div class="a sunk combo" style="left:143px;top:413px;width:108px;height:20px"><i></i><span class="t">ON</span><div class="dd"><b></b><u></u><s></s></div></div>
<div class="a sunk combo" style="left:143px;top:437px;width:108px;height:20px"><i></i><span class="t">Constant Voltage</span><div class="dd"><b></b><u></u><s></s></div></div>
<div class="a sunk combo" style="left:143px;top:462px;width:108px;height:20px"><i></i><span class="t">Automatic</span><div class="dd"><b></b><u></u><s></s></div></div>
<div class="a sunk combo dis" style="left:143px;top:487px;width:108px;height:20px"><i></i><span class="t">512 mA</span><div class="dd"><b></b><u></u><s></s></div></div>
<div class="a sunk combo" style="left:143px;top:513px;width:108px;height:20px"><i></i><span class="t">Fast</span><div class="dd"><b></b><u></u><s></s></div></div>
<div class="a sunk combo" style="left:143px;top:537px;width:108px;height:20px"><i></i><span class="t">No</span><div class="dd"><b></b><u></u><s></s></div></div>
<div class="a sunk combo dis" style="left:143px;top:561px;width:108px;height:20px"><i></i><span class="t">Local</span><div class="dd"><b></b><u></u><s></s></div></div>
<div class="a t" style="left:262px;top:417px;transform:scaleX(0.8932)">Voltage (V) :</div>
<div class="a t" style="left:262px;top:441px;transform:scaleX(0.8885)">Current Clamp Source (1-650 mA) :</div>
<div class="a t" style="left:262px;top:465px;transform:scaleX(0.8933)">Current Clamp Source Adjusted (mA) :</div>
<div class="a t" style="left:262px;top:491px;transform:scaleX(0.8868)">Current Clamp Sink (1-650 mA) :</div>
<div class="a t" style="left:262px;top:515px">Ramp (mSec) :</div>
<div class="a t" style="left:262px;top:541px">Adjustment Speed :</div>
<div class="a t" style="left:262px;top:564px">Trip Mode (Disable on Fault) :</div>
<div class="a sunk edit" style="left:451px;top:414px;width:90px;height:21px"><i></i><span class="t">5.00</span></div>
<div class="a sunk edit" style="left:451px;top:439px;width:90px;height:21px"><i></i><span class="t">200.00</span></div>
<div class="a sunk edit ro" style="left:451px;top:463px;width:90px;height:21px"><i></i><span class="t">228.76</span></div>
<div class="a sunk edit" style="left:451px;top:487px;width:90px;height:21px"><i></i><span class="t">75.00</span></div>
<div class="a sunk edit ro" style="left:451px;top:510px;width:90px;height:21px"><i></i><span class="t"></span></div>
<div class="a sunk combo dis" style="left:451px;top:536px;width:90px;height:20px"><i></i><span class="t"></span><div class="dd"><b></b><u></u><s></s></div></div>
<div class="a sunk combo" style="left:451px;top:560px;width:90px;height:20px"><i></i><span class="t">Disable</span><div class="dd"><b></b><u></u><s></s></div></div>
<div class="a btn" style="left:572px;top:412px;width:122px;height:35px"><i></i><span class="tc" style="padding-top:2px">Apply Settings to<br>Checked Channels</span></div>
<div class="a btn" style="left:704px;top:412px;width:122px;height:35px"><i></i><span class="tc" style="padding-top:2px">Apply Settings to All<br>Channels</span></div>
<div class="a btn" style="left:572px;top:454px;width:122px;height:35px"><i></i><span class="tc" style="padding-top:2px">Reset Checked<br>Channels</span></div>
<div class="a btn" style="left:704px;top:454px;width:122px;height:35px"><i></i><span class="tc" style="padding-top:2px">Clear All Channels<br>Faults</span></div>
<div class="a btn" style="left:572px;top:496px;width:122px;height:35px"><i></i><span class="tc" style="padding-top:9px">Check All Channels</span></div>
<div class="a btn" style="left:704px;top:496px;width:122px;height:35px"><i></i><span class="tc" style="padding-top:9px">Uncheck All Channels</span></div>
<div class="a grp" style="left:16px;top:597px;width:820px;height:39px"></div>
<div class="a glab" style="left:23px;top:591px;width:223px;height:13px"></div>
<div class="a t" style="left:25px;top:591px;transform:scaleX(0.9062)">Measurement Settings (applied to all channels)</div>
<div class="a t" style="left:22px;top:612px;transform:scaleX(0.9073)">Power Line Frequency :</div>
<div class="a sunk combo" style="left:143px;top:609px;width:60px;height:20px"><i></i><span class="t">60Hz</span><div class="dd"><b></b><u></u><s></s></div></div>
<div class="a t" style="left:212px;top:612px;transform:scaleX(0.9094)">Aperture Type :</div>
<div class="a sunk combo" style="left:289px;top:609px;width:158px;height:20px"><i></i><span class="t">Reading Rate Per Second</span><div class="dd"><b></b><u></u><s></s></div></div>
<div class="a t" style="left:455px;top:612px;transform:scaleX(0.9031)">Aperture Value :</div>
<div class="a sunk combo" style="left:539px;top:609px;width:79px;height:20px"><i></i><span class="t">1000</span><div class="dd"><b></b><u></u><s></s></div></div>
<div class="a btn" style="left:620px;top:608px;width:33px;height:22px"><i></i><span class="tc" style="padding-top:2px">Set</span></div>
<div class="a t" style="left:659.5px;top:612px;transform:scaleX(0.9119)">[ Measurement takes 1.0 mSec ]</div>
<div class="a btn" style="left:6px;top:652px;width:120px;height:23px"><i></i><span class="tc" style="padding-top:3px">Sa<span class="u">v</span>e Settings</span></div>
<div class="a btn" style="left:132px;top:652px;width:120px;height:23px"><i></i><span class="tc" style="padding-top:3px">Recal<span class="u">l</span> Settings</span></div>
<div class="a btn" style="left:518px;top:652px;width:60px;height:23px"><i></i><span class="tc" style="padding-top:3px"><span class="u">I</span>nitialize...</span></div>
<div class="a btn" style="left:584px;top:652px;width:60px;height:23px"><i></i><span class="tc" style="padding-top:3px"><span class="u">R</span>eset</span></div>
<div class="a btn" style="left:650px;top:652px;width:60px;height:23px;color:#a0a0a0;text-shadow:1px 1px 0 #fff"><i></i><span class="tc" style="padding-top:3px"><span class="u">A</span>pply</span></div>
<div class="a btn" style="left:716px;top:652px;width:60px;height:23px"><i></i><span class="tc" style="padding-top:3px"><span class="u">C</span>lose</span></div>
<div class="a btn" style="left:782px;top:652px;width:60px;height:23px"><i></i><span class="tc" style="padding-top:3px">Help</span></div>
<div class="a" style="left:1px;top:684px;width:696px;height:15px;border:1px solid;border-color:#a0a0a0 #fff #fff #a0a0a0;border-left-color:transparent;"><span class="a t" style="left:4px;top:-0.5px">Ch1: Raw Real Time I Src Clamp</span></div>
<div class="a" style="left:699px;top:684px;width:87px;height:15px;border:1px solid;border-color:#a0a0a0 #fff #fff #a0a0a0;"><span class="a t" style="left:1px;top:-0.5px">Initialized</span></div>
<div class="a" style="left:788px;top:684px;width:59px;height:15px;border:1px solid;border-color:#a0a0a0 #fff #fff #a0a0a0;"><span class="a t" style="left:1.5px;top:-0.5px">Slot 0x105</span></div>
<div class="a" style="left:0;top:699px;width:849px;height:1px;background:#2893cb;opacity:.45"></div>
<div class="a" id="frame2"></div>
<div class="a" id="frame"></div>
</body></html>
